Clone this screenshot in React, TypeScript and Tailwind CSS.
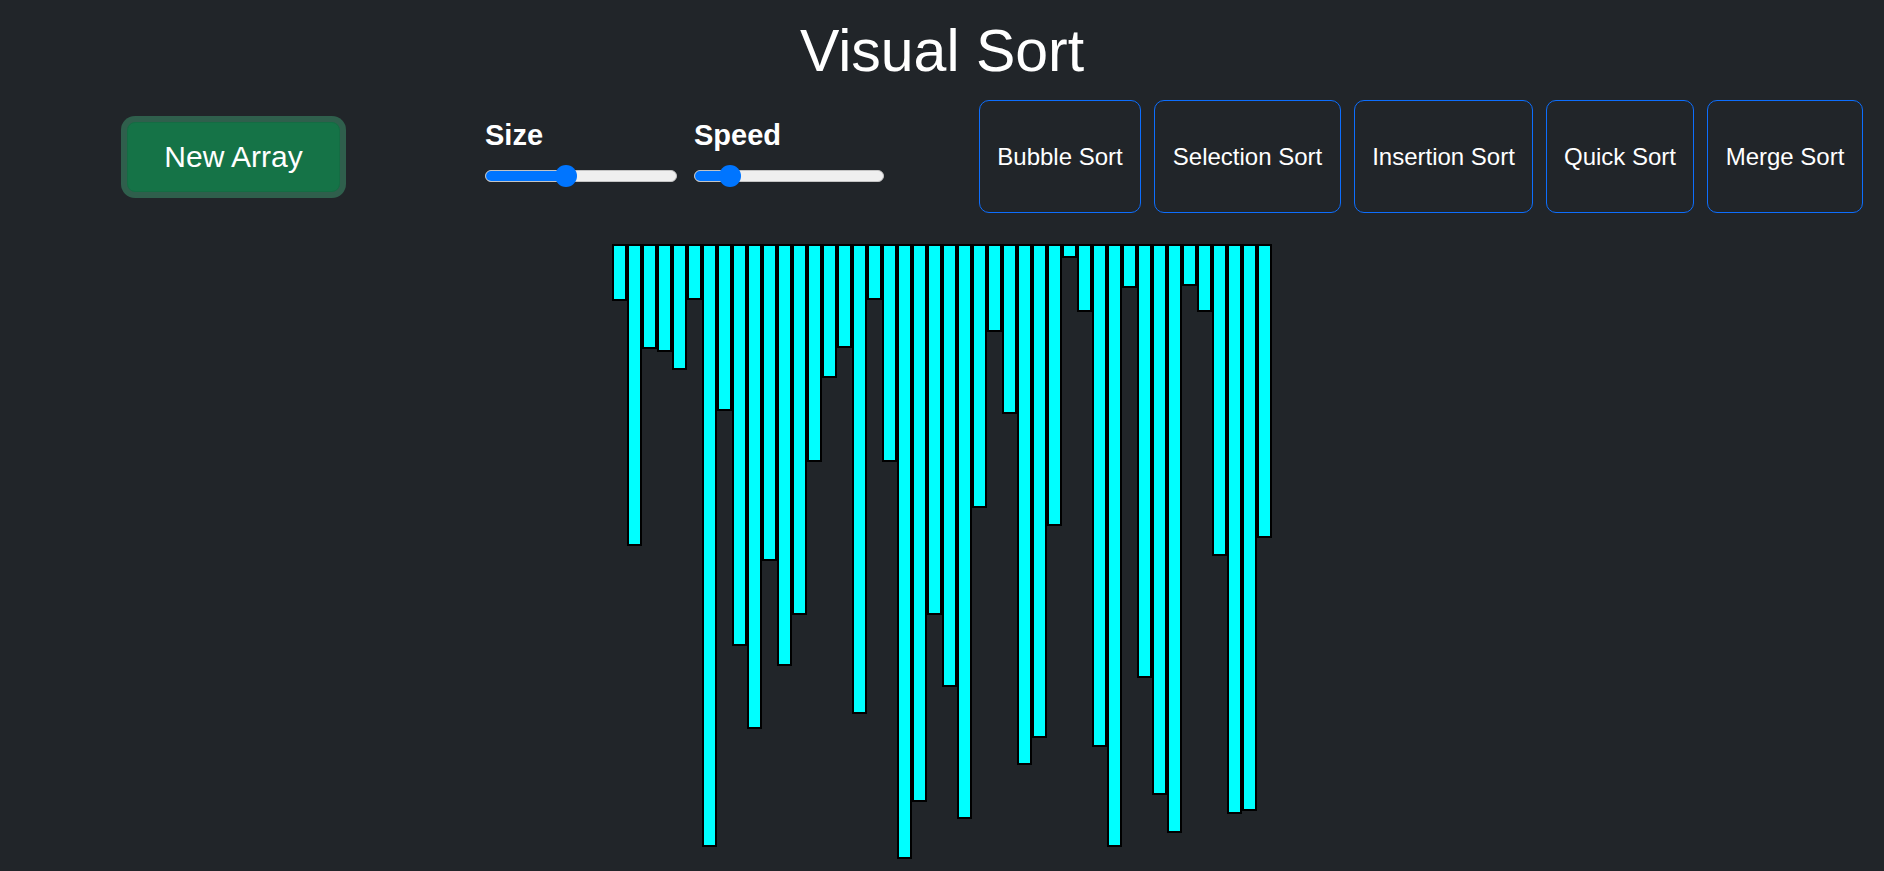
import React from "react";

const heights = [57, 302, 105, 108, 126, 56, 603, 167, 402, 485, 317, 422, 371, 218, 134, 104, 470, 56, 218, 615, 558, 371, 443, 575, 264, 88, 170, 521, 494, 282, 14, 68, 503, 603, 44, 434, 551, 589, 42, 68, 312, 570, 567, 294];

const sorts: { label: string; w: string }[] = [
  { label: "Bubble Sort", w: "w-[162px]" },
  { label: "Selection Sort", w: "w-[187px]" },
  { label: "Insertion Sort", w: "w-[179px]" },
  { label: "Quick Sort", w: "w-[148px]" },
  { label: "Merge Sort", w: "w-[156px]" },
];

function Slider({ width, fill, thumb }: { width: string; fill: string; thumb: string }) {
  return (
    <div className={`relative h-[22px] flex items-center ${width}`}>
      <div className="relative w-full h-[12px] rounded-full bg-[#efefef] border border-[#c4c4c4] overflow-hidden">
        <div className={`h-full bg-[#0075ff] ${fill}`} />
      </div>
      <div className={`absolute top-0 ${thumb} w-[22px] h-[22px] rounded-full bg-[#0075ff]`} />
    </div>
  );
}

export default function App() {
  return (
    <div
      className="min-h-screen bg-[#212529] text-white"
      style={{ fontFamily: '"Liberation Sans", Arial, sans-serif' }}
    >
      <h1 className="pt-[17px] text-center text-[59px] leading-[68px] font-normal">Visual Sort</h1>

      <div className="mt-[15px] flex items-start">
        <button className="ml-[127px] mt-[22px] w-[213px] h-[70px] flex items-center justify-center rounded-[8px] bg-[#157347] border border-[#146c43] ring-[6px] ring-[#2f5f4c] text-[30px] leading-[34px] text-white">
          New Array
        </button>

        <div className="ml-[145px] mt-[19px] flex gap-[17px]">
          <div className="flex flex-col w-[192px]">
            <div className="h-[33px] text-[29px] leading-[33px] font-bold">Size</div>
            <div className="mt-[12.5px]">
              <Slider width="w-[192px]" fill="w-[81px]" thumb="left-[70px]" />
            </div>
          </div>
          <div className="flex flex-col w-[190px]">
            <div className="h-[33px] text-[29px] leading-[33px] font-bold">Speed</div>
            <div className="mt-[12.5px]">
              <Slider width="w-[190px]" fill="w-[36px]" thumb="left-[25px]" />
            </div>
          </div>
        </div>

        <div className="ml-[95px] flex gap-[13px]">
          {sorts.map((s) => (
            <button
              key={s.label}
              className={`${s.w} h-[113px] flex items-center justify-center rounded-[10px] border border-[#0d6efd] bg-transparent text-[24px] leading-[28px] text-white whitespace-nowrap`}
            >
              {s.label}
            </button>
          ))}
        </div>
      </div>

      <div className="mt-[31px] flex justify-center items-start">
        {heights.map((h, i) => (
          <div
            key={i}
            className="w-[15px] border-2 border-black bg-[#00ffff]"
            style={{ height: `${h}px` }}
          />
        ))}
      </div>
    </div>
  );
}
